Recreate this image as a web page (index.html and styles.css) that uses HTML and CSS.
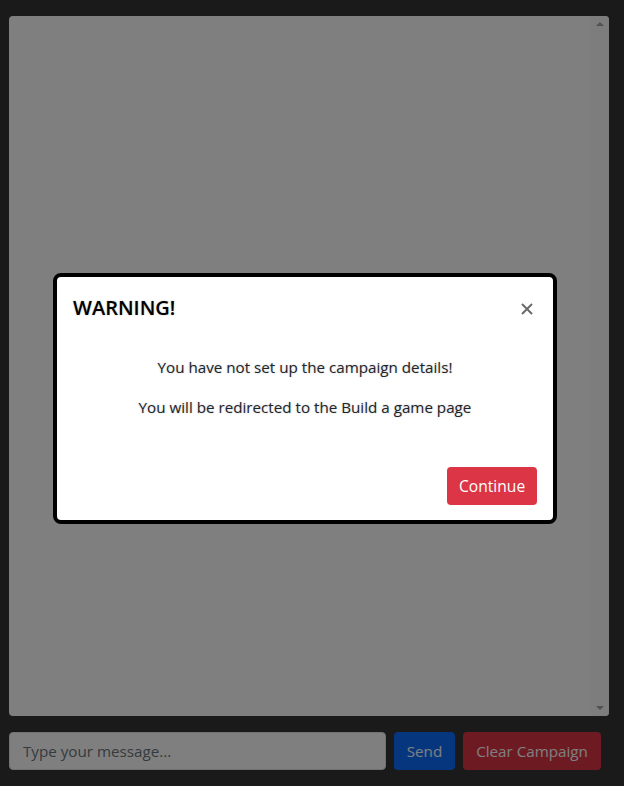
FILE: index.html
```html
<!DOCTYPE html>
<html>
<head>
<meta charset="utf-8">
<link rel="stylesheet" href="styles.css">
</head>
<body>
<div class="page">
  <div class="chat-box">
    <div class="chat-log"></div>
    <div class="scroll-track">
      <span class="arrow-up"></span>
      <span class="arrow-down"></span>
    </div>
  </div>
  <div class="composer">
    <input class="msg-input" type="text" placeholder="Type your message...">
    <button class="btn btn-primary">Send</button>
    <button class="btn btn-danger">Clear Campaign</button>
  </div>
</div>

<div class="backdrop"></div>
<div class="modal">
  <div class="modal-header">
    <h5 class="modal-title">WARNING!</h5>
    <svg class="close" width="12" height="12" viewBox="0 0 12 12"><path d="M1 1L11 11M11 1L1 11" stroke="#6b6b6b" stroke-width="2" fill="none"/></svg>
  </div>
  <div class="modal-body">
    <p>You have not set up the campaign details!</p>
    <p>You will be redirected to the Build a game page</p>
  </div>
  <div class="modal-footer">
    <button class="btn btn-danger btn-continue">Continue</button>
  </div>
</div>
</body>
</html>
```

FILE: styles.css
```css
* { box-sizing: border-box; }
html, body { margin: 0; padding: 0; }
body {
  background: #343434;
  font-family: "Open Sans", "Noto Sans", sans-serif;
  font-size: 15.2px;
  width: 624px;
  height: 786px;
  overflow: hidden;
}
.page {
  padding: 16px 15px 0 9px;
  display: flex;
  flex-direction: column;
  gap: 16px;
}
.chat-box {
  height: 700px;
  background: #fff;
  border-radius: 4px;
  display: flex;
  overflow: hidden;
}
.chat-log { flex: 1; }
.scroll-track {
  width: 18px;
  background: #fafafa;
  position: relative;
}
.arrow-up, .arrow-down {
  position: absolute;
  left: 5px;
  width: 0; height: 0;
  border-left: 4px solid transparent;
  border-right: 4px solid transparent;
}
.arrow-up { top: 6px; border-bottom: 4px solid #a3a3a3; }
.arrow-down { bottom: 6px; border-top: 4px solid #a3a3a3; }

.composer {
  display: flex;
  gap: 8px;
  padding-right: 8px;
}
.msg-input {
  width: 377px;
  height: 38px;
  border: 1px solid #dee2e6;
  border-radius: 4px;
  background: #fff;
  padding: 6px 13px;
  font-family: inherit;
  font-size: 15.2px;
  color: #212529;
}
.msg-input::placeholder { color: #6c757d; }
.btn {
  height: 38px;
  border: none;
  border-radius: 4px;
  padding: 6px 12px;
  font-family: inherit;
  font-size: 15.2px;
  color: #fff;
  white-space: nowrap;
}
.btn-primary { background: #0d6efd; width: 61px; }
.btn-danger { background: #dc3545; }
.composer .btn-danger { width: 138px; }

.backdrop {
  position: fixed;
  inset: 0;
  background: rgba(0,0,0,0.5);
}
.modal {
  position: fixed;
  left: 53px;
  top: 273px;
  width: 504px;
  height: 251px;
  background: #fff;
  border: 4px solid #000;
  border-radius: 8px;
  display: flex;
  flex-direction: column;
  color: #212529;
  text-shadow: 0 0 2px rgba(0,0,0,0.25);
}
.modal-header {
  display: flex;
  align-items: center;
  justify-content: space-between;
  padding: 16px;
}
.modal-title {
  margin: 0;
  font-size: 20px;
  font-weight: 600;
  line-height: 30px;
  color: #000;
}
.close {
  margin-right: 4px;
  margin-top: 2px;
}
.modal-body {
  padding: 16px;
  text-align: center;
  flex: 1;
}
.modal-body p {
  margin: 0 0 16px;
  line-height: 24px;
  font-size: 15.2px;
}
.modal-footer {
  display: flex;
  justify-content: flex-end;
  padding: 12px 16px 15px;
}
.btn-continue { width: 90px; text-shadow: none; font-size: 15.6px; }
```
